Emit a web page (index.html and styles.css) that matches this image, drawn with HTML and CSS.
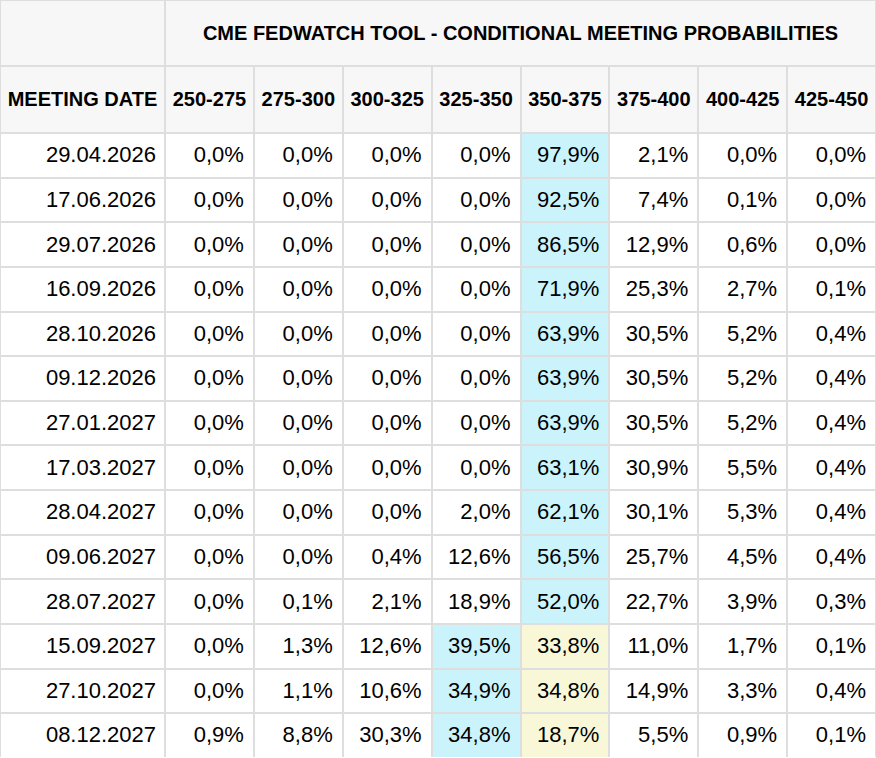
FILE: index.html
```html
<!DOCTYPE html>
<html lang="en">
<head>
<meta charset="utf-8">
<title>CME FedWatch Tool - Conditional Meeting Probabilities</title>
<link rel="stylesheet" href="styles.css">
</head>
<body>
<div class="table">
  <div class="cell head corner"></div>
  <div class="cell head title">CME FEDWATCH TOOL - CONDITIONAL MEETING PROBABILITIES</div>

  <div class="cell head">MEETING DATE</div>
  <div class="cell head">250-275</div>
  <div class="cell head">275-300</div>
  <div class="cell head">300-325</div>
  <div class="cell head">325-350</div>
  <div class="cell head">350-375</div>
  <div class="cell head">375-400</div>
  <div class="cell head">400-425</div>
  <div class="cell head">425-450</div>

  <div class="cell date">29.04.2026</div><div class="cell">0,0%</div><div class="cell">0,0%</div><div class="cell">0,0%</div><div class="cell">0,0%</div><div class="cell blue">97,9%</div><div class="cell">2,1%</div><div class="cell">0,0%</div><div class="cell">0,0%</div>
  <div class="cell date">17.06.2026</div><div class="cell">0,0%</div><div class="cell">0,0%</div><div class="cell">0,0%</div><div class="cell">0,0%</div><div class="cell blue">92,5%</div><div class="cell">7,4%</div><div class="cell">0,1%</div><div class="cell">0,0%</div>
  <div class="cell date">29.07.2026</div><div class="cell">0,0%</div><div class="cell">0,0%</div><div class="cell">0,0%</div><div class="cell">0,0%</div><div class="cell blue">86,5%</div><div class="cell">12,9%</div><div class="cell">0,6%</div><div class="cell">0,0%</div>
  <div class="cell date">16.09.2026</div><div class="cell">0,0%</div><div class="cell">0,0%</div><div class="cell">0,0%</div><div class="cell">0,0%</div><div class="cell blue">71,9%</div><div class="cell">25,3%</div><div class="cell">2,7%</div><div class="cell">0,1%</div>
  <div class="cell date">28.10.2026</div><div class="cell">0,0%</div><div class="cell">0,0%</div><div class="cell">0,0%</div><div class="cell">0,0%</div><div class="cell blue">63,9%</div><div class="cell">30,5%</div><div class="cell">5,2%</div><div class="cell">0,4%</div>
  <div class="cell date">09.12.2026</div><div class="cell">0,0%</div><div class="cell">0,0%</div><div class="cell">0,0%</div><div class="cell">0,0%</div><div class="cell blue">63,9%</div><div class="cell">30,5%</div><div class="cell">5,2%</div><div class="cell">0,4%</div>
  <div class="cell date">27.01.2027</div><div class="cell">0,0%</div><div class="cell">0,0%</div><div class="cell">0,0%</div><div class="cell">0,0%</div><div class="cell blue">63,9%</div><div class="cell">30,5%</div><div class="cell">5,2%</div><div class="cell">0,4%</div>
  <div class="cell date">17.03.2027</div><div class="cell">0,0%</div><div class="cell">0,0%</div><div class="cell">0,0%</div><div class="cell">0,0%</div><div class="cell blue">63,1%</div><div class="cell">30,9%</div><div class="cell">5,5%</div><div class="cell">0,4%</div>
  <div class="cell date">28.04.2027</div><div class="cell">0,0%</div><div class="cell">0,0%</div><div class="cell">0,0%</div><div class="cell">2,0%</div><div class="cell blue">62,1%</div><div class="cell">30,1%</div><div class="cell">5,3%</div><div class="cell">0,4%</div>
  <div class="cell date">09.06.2027</div><div class="cell">0,0%</div><div class="cell">0,0%</div><div class="cell">0,4%</div><div class="cell">12,6%</div><div class="cell blue">56,5%</div><div class="cell">25,7%</div><div class="cell">4,5%</div><div class="cell">0,4%</div>
  <div class="cell date">28.07.2027</div><div class="cell">0,0%</div><div class="cell">0,1%</div><div class="cell">2,1%</div><div class="cell">18,9%</div><div class="cell blue">52,0%</div><div class="cell">22,7%</div><div class="cell">3,9%</div><div class="cell">0,3%</div>
  <div class="cell date">15.09.2027</div><div class="cell">0,0%</div><div class="cell">1,3%</div><div class="cell">12,6%</div><div class="cell blue">39,5%</div><div class="cell yellow">33,8%</div><div class="cell">11,0%</div><div class="cell">1,7%</div><div class="cell">0,1%</div>
  <div class="cell date">27.10.2027</div><div class="cell">0,0%</div><div class="cell">1,1%</div><div class="cell">10,6%</div><div class="cell blue">34,9%</div><div class="cell yellow">34,8%</div><div class="cell">14,9%</div><div class="cell">3,3%</div><div class="cell">0,4%</div>
  <div class="cell date">08.12.2027</div><div class="cell">0,9%</div><div class="cell">8,8%</div><div class="cell">30,3%</div><div class="cell blue">34,8%</div><div class="cell yellow">18,7%</div><div class="cell">5,5%</div><div class="cell">0,9%</div><div class="cell">0,1%</div>
</div>
</body>
</html>
```

FILE: styles.css
```css
html, body {
  margin: 0;
  padding: 0;
  background: #ffffff;
}

body {
  font-family: "Liberation Sans", Arial, sans-serif;
  color: #000000;
  overflow: hidden;
}

.table {
  width: 876px;
  box-sizing: border-box;
  display: grid;
  grid-template-columns: 163px repeat(8, 1fr);
  grid-template-rows: 64px 65px;
  grid-auto-rows: 42.64px;
  gap: 2px;
  padding: 1px 1px 0 1px;
  background: #dedede;
}

.cell {
  background: #ffffff;
  display: flex;
  align-items: center;
  justify-content: flex-end;
  padding: 0 9px 0 0;
  font-size: 22px;
  white-space: nowrap;
}

.date {
  padding-right: 8px;
}

.head {
  background: #f7f7f7;
  font-weight: bold;
  font-size: 20px;
  justify-content: center;
  padding: 0;
}

.title {
  grid-column: 2 / span 8;
}

.blue {
  background: #caf3fc;
}

.yellow {
  background: #f8f8d8;
}
```
